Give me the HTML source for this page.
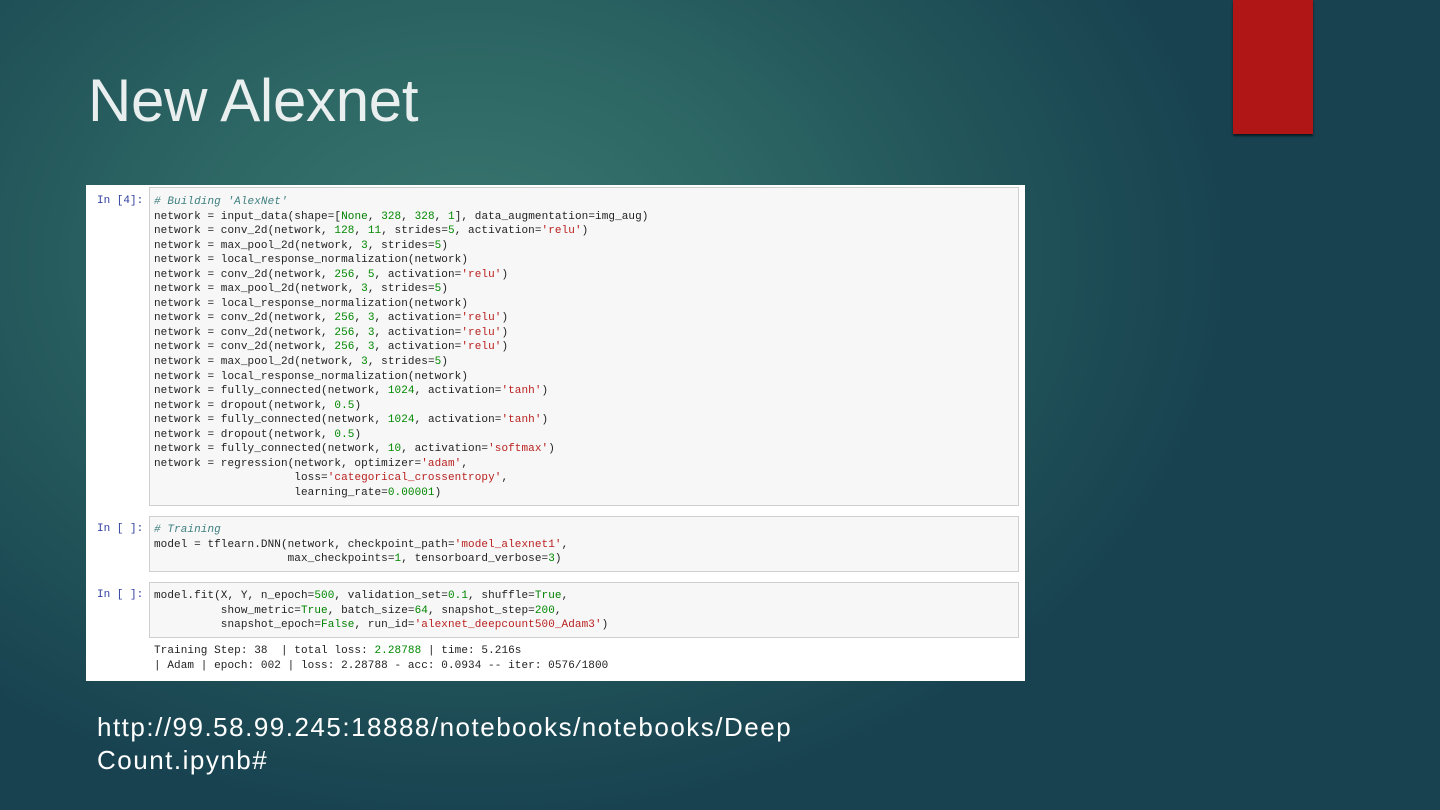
<!DOCTYPE html>
<html><head><meta charset="utf-8"><style>
*{margin:0;padding:0;box-sizing:border-box}
body{width:1440px;height:810px;overflow:hidden;position:relative;
background:radial-gradient(ellipse 760px 560px at 470px 260px,#3a7670 0%,#2e6865 35%,#215359 70%,#184250 100%),#184250;
font-family:"Liberation Sans",sans-serif}
.red{position:absolute;left:1233px;top:0;width:80px;height:134px;background:#b01616;box-shadow:0 2px 2px rgba(0,0,0,.6)}
h1{position:absolute;left:88px;top:66px;font-weight:normal;font-size:60px;color:#e9eeee;letter-spacing:-0.3px}
.nb{position:absolute;left:86px;top:185px;width:939px;height:496px;background:#fff}
.cell{position:absolute;left:63px;width:870px;background:#f7f7f7;border:1px solid #cfcfcf}
pre{font-family:"Liberation Mono",monospace;font-size:11px;line-height:14.55px;color:#222;letter-spacing:0.08px}
.code{position:absolute;left:68px}
.p{position:absolute;left:11px;color:#303f9f;font-family:"Liberation Mono",monospace;font-size:11px}
.c{color:#408080;font-style:italic}.s{color:#ba2121}.n{color:#080}.k{color:#008000}
.url{position:absolute;left:97px;top:711px;color:#fff;font-size:26px;line-height:33px;letter-spacing:1.5px}
</style></head><body>
<div class="red"></div>
<h1>New Alexnet</h1>
<div class="nb">
<div class="p" style="top:10px">In [4]:</div>
<div class="cell" style="top:2px;height:319px"></div>
<pre class="code" style="top:10px"><span class="c"># Building 'AlexNet'</span>
network = input_data(shape=[<span class="k">None</span>, <span class="n">328</span>, <span class="n">328</span>, <span class="n">1</span>], data_augmentation=img_aug)
network = conv_2d(network, <span class="n">128</span>, <span class="n">11</span>, strides=<span class="n">5</span>, activation=<span class="s">'relu'</span>)
network = max_pool_2d(network, <span class="n">3</span>, strides=<span class="n">5</span>)
network = local_response_normalization(network)
network = conv_2d(network, <span class="n">256</span>, <span class="n">5</span>, activation=<span class="s">'relu'</span>)
network = max_pool_2d(network, <span class="n">3</span>, strides=<span class="n">5</span>)
network = local_response_normalization(network)
network = conv_2d(network, <span class="n">256</span>, <span class="n">3</span>, activation=<span class="s">'relu'</span>)
network = conv_2d(network, <span class="n">256</span>, <span class="n">3</span>, activation=<span class="s">'relu'</span>)
network = conv_2d(network, <span class="n">256</span>, <span class="n">3</span>, activation=<span class="s">'relu'</span>)
network = max_pool_2d(network, <span class="n">3</span>, strides=<span class="n">5</span>)
network = local_response_normalization(network)
network = fully_connected(network, <span class="n">1024</span>, activation=<span class="s">'tanh'</span>)
network = dropout(network, <span class="n">0.5</span>)
network = fully_connected(network, <span class="n">1024</span>, activation=<span class="s">'tanh'</span>)
network = dropout(network, <span class="n">0.5</span>)
network = fully_connected(network, <span class="n">10</span>, activation=<span class="s">'softmax'</span>)
network = regression(network, optimizer=<span class="s">'adam'</span>,
                     loss=<span class="s">'categorical_crossentropy'</span>,
                     learning_rate=<span class="n">0.00001</span>)</pre>
<div class="p" style="top:338px">In [ ]:</div>
<div class="cell" style="top:331px;height:56px"></div>
<pre class="code" style="top:338px"><span class="c"># Training</span>
model = tflearn.DNN(network, checkpoint_path=<span class="s">'model_alexnet1'</span>,
                    max_checkpoints=<span class="n">1</span>, tensorboard_verbose=<span class="n">3</span>)</pre>
<div class="p" style="top:404px">In [ ]:</div>
<div class="cell" style="top:397px;height:56px"></div>
<pre class="code" style="top:404px">model.fit(X, Y, n_epoch=<span class="n">500</span>, validation_set=<span class="n">0.1</span>, shuffle=<span class="k">True</span>,
          show_metric=<span class="k">True</span>, batch_size=<span class="n">64</span>, snapshot_step=<span class="n">200</span>,
          snapshot_epoch=<span class="k">False</span>, run_id=<span class="s">'alexnet_deepcount500_Adam3'</span>)</pre>
<pre class="code" style="top:459px">Training Step: 38  | total loss: <span class="n">2.28788</span> | time: 5.216s
| Adam | epoch: 002 | loss: 2.28788 - acc: 0.0934 -- iter: 0576/1800</pre>
</div>
<div class="url">http://99.58.99.245:18888/notebooks/notebooks/Deep<br>Count.ipynb#</div>
</body></html>
